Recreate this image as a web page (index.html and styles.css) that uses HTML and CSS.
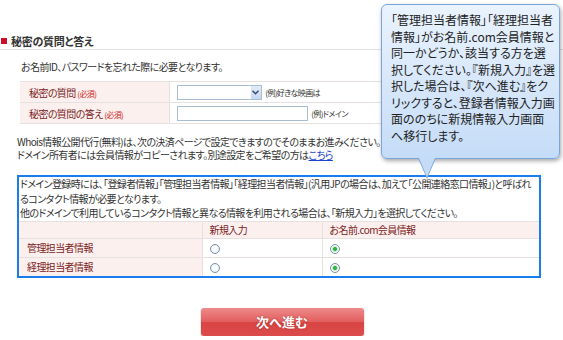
FILE: index.html
```html
<!DOCTYPE html>
<html lang="ja">
<head>
  <meta charset="UTF-8">
  <title>秘密の質問と答え</title>
  <link rel="stylesheet" href="styles.css">
</head>
<body>
  <div class="page">
    <h2 class="section-title"><span class="mark"></span>秘密の質問と答え</h2>
    <p class="lead">お名前ID、パスワードを忘れた際に必要となります。</p>
    <table class="form">
      <tr>
        <th>秘密の質問 <span class="req">(必須)</span></th>
        <td>
          <span class="select"><span class="arrow"><svg width="7" height="5" viewBox="0 0 7 5"><path d="M0.5 0.8 L3.5 3.8 L6.5 0.8" fill="none" stroke="#2a4a7a" stroke-width="1.4"/></svg></span></span>
          <span class="hint">(例)好きな映画は</span>
        </td>
      </tr>
      <tr>
        <th>秘密の質問の答え <span class="req">(必須)</span></th>
        <td>
          <span class="textbox"></span>
          <span class="hint">(例)ドメイン</span>
        </td>
      </tr>
    </table>
    <p class="whois">Whois情報公開代行(無料)は、次の決済ページで設定できますのでそのままお進みください。<br>ドメイン所有者には会員情報がコピーされます。別途設定をご希望の方は<a href="#">こちら</a></p>

    <div class="contact-box">
      <p>ドメイン登録時には、「登録者情報」「管理担当者情報」「経理担当者情報」(汎用JPの場合は、加えて「公開連絡窓口情報」)と呼ばれるコンタクト情報が必要となります。<br>他のドメインで利用しているコンタクト情報と異なる情報を利用される場合は、「新規入力」を選択してください。</p>
      <table class="contact">
        <tr class="head">
          <th></th>
          <td>新規入力</td>
          <td>お名前.com会員情報</td>
        </tr>
        <tr>
          <th>管理担当者情報</th>
          <td><input type="radio" name="admin"></td>
          <td><input type="radio" name="admin" checked></td>
        </tr>
        <tr>
          <th>経理担当者情報</th>
          <td><input type="radio" name="bill"></td>
          <td><input type="radio" name="bill" checked></td>
        </tr>
      </table>
    </div>

    <div class="actions">
      <button class="next">次へ進む</button>
    </div>
  </div>

  <div class="balloon">
    「管理担当者情報」「経理担当者<br>情報」がお名前.com会員情報と<br>同一かどうか、該当する方を選<br>択してください。『新規入力』を選<br>択した場合は、『次へ進む』をク<br>リックすると、登録者情報入力画<br>面ののちに新規情報入力画面<br>へ移行します。
  </div>
</body>
</html>
```

FILE: styles.css
```css
body {
  margin: 0;
  font-family: "Noto Sans CJK JP", "DejaVu Sans", sans-serif;
  font-size: 10px;
  font-feature-settings: "palt";
  color: #333;
  background: #fff;
}
.page {
  padding-top: 33px;
  letter-spacing: -0.6px;
}
.section-title {
  display: flex;
  align-items: center;
  margin: 0;
  height: 16px;
  font-size: 11px;
  font-weight: bold;
  letter-spacing: -0.3px;
  color: #333;
  border-bottom: 1px solid #e2e2e2;
}
.mark {
  display: inline-block;
  width: 6px;
  height: 6px;
  background: #c8102e;
  margin: 0 4px 0 1px;
}
.lead {
  margin: 10px 0 0 21px;
  line-height: 13px;
}
.form {
  margin: 8px 0 0 20px;
  width: 525px;
  border-collapse: collapse;
}
.form th,
.form td {
  height: 20px;
  padding: 0;
  border-top: 1px solid #e6e0e0;
  border-bottom: 1px solid #e6e0e0;
}
.form th {
  width: 149px;
  background: #fcf0ef;
  color: #7b2323;
  font-weight: normal;
  text-align: left;
  padding-left: 9px;
  box-sizing: border-box;
  border-right: 1px solid #e6e0e0;
}
.req {
  color: #d21f1f;
  font-size: 8px;
}
.form td {
  padding-left: 7px;
}
.select,
.textbox {
  display: inline-block;
  vertical-align: middle;
  height: 13px;
  border: 1px solid #a9bdd3;
  background: #fff;
  position: relative;
}
.select {
  width: 83px;
}
.arrow {
  position: absolute;
  right: 0;
  top: 0;
  width: 10px;
  height: 13px;
  background: linear-gradient(#e3ecf8, #c7d8ee);
  display: flex;
  align-items: center;
  justify-content: center;
}
.textbox {
  width: 129px;
}
.hint {
  font-size: 8px;
  vertical-align: middle;
  margin-left: 2px;
}
.whois {
  margin: 11px 0 0 17px;
  line-height: 13px;
}
.whois a {
  color: #1a44cc;
}
.contact-box {
  margin: 14px 0 0 17px;
  width: 520px;
  border: 2px solid #1b7ded;
}
.contact-box p {
  margin: 0;
  padding: 0 1px;
  line-height: 14.5px;
  word-break: break-all;
}
.contact {
  width: 100%;
  border-collapse: collapse;
}
.contact th,
.contact td {
  padding: 0;
  border-top: 1px solid #e6e0e0;
  height: 18px;
  text-align: left;
}
.contact th {
  width: 183px;
  background: #fcf0ef;
  color: #7b2323;
  font-weight: normal;
  padding-left: 8px;
  box-sizing: border-box;
  border-right: 1px solid #e6e0e0;
}
.contact td {
  padding-left: 7px;
  border-right: 1px solid #e6e0e0;
}
.contact td:nth-child(2) {
  width: 120px;
  box-sizing: border-box;
}
.contact td:last-child {
  border-right: none;
}
.contact .head td,
.contact .head th {
  background: #fcf0ef;
  height: 16px;
  color: #7b2323;
}
.contact input {
  appearance: none;
  margin: 0;
  width: 10px;
  height: 10px;
  border: 1px solid #7b93ad;
  border-radius: 50%;
  background: radial-gradient(#fff 35%, #d9e2ec);
  vertical-align: middle;
}
.contact input:checked {
  background: radial-gradient(#35b544 28%, #bfe7c3 42%, #fff 60%, #dde6ee);
}
.actions {
  display: flex;
  justify-content: center;
  margin-top: 30px;
}
.next {
  width: 163px;
  height: 28px;
  margin-left: 1px;
  border: none;
  border-radius: 3px;
  background: linear-gradient(#ef8a8a, #e15d5d 50%, #d94444 52%, #dc4c4c);
  box-shadow: 0 1px 2px rgba(0, 0, 0, 0.3);
  color: #fff;
  font-family: "Noto Sans CJK JP", sans-serif;
  font-size: 13px;
  font-weight: bold;
  letter-spacing: 0;
  text-shadow: 0 0 2px rgba(120, 0, 0, 0.5);
}
.balloon {
  position: absolute;
  left: 381px;
  top: 4px;
  width: 168px;
  height: 146px;
  padding: 7px 0 0 9px;
  border: 1px solid #7aa5db;
  border-radius: 6px;
  background: linear-gradient(#eaf3fe, #c5dcf7);
  box-shadow: 1px 2px 4px rgba(0, 0, 0, 0.35);
  font-size: 12px;
  line-height: 16.5px;
  color: #222;
  white-space: nowrap;
}
.balloon::before,
.balloon::after {
  content: "";
  position: absolute;
  width: 0;
  height: 0;
}
.balloon::before {
  left: 36px;
  bottom: -21px;
  border-left: 9px solid transparent;
  border-right: 9px solid transparent;
  border-top: 21px solid #7aa5db;
}
.balloon::after {
  left: 37px;
  bottom: -19px;
  border-left: 8px solid transparent;
  border-right: 8px solid transparent;
  border-top: 19px solid #c5dcf7;
}
```
